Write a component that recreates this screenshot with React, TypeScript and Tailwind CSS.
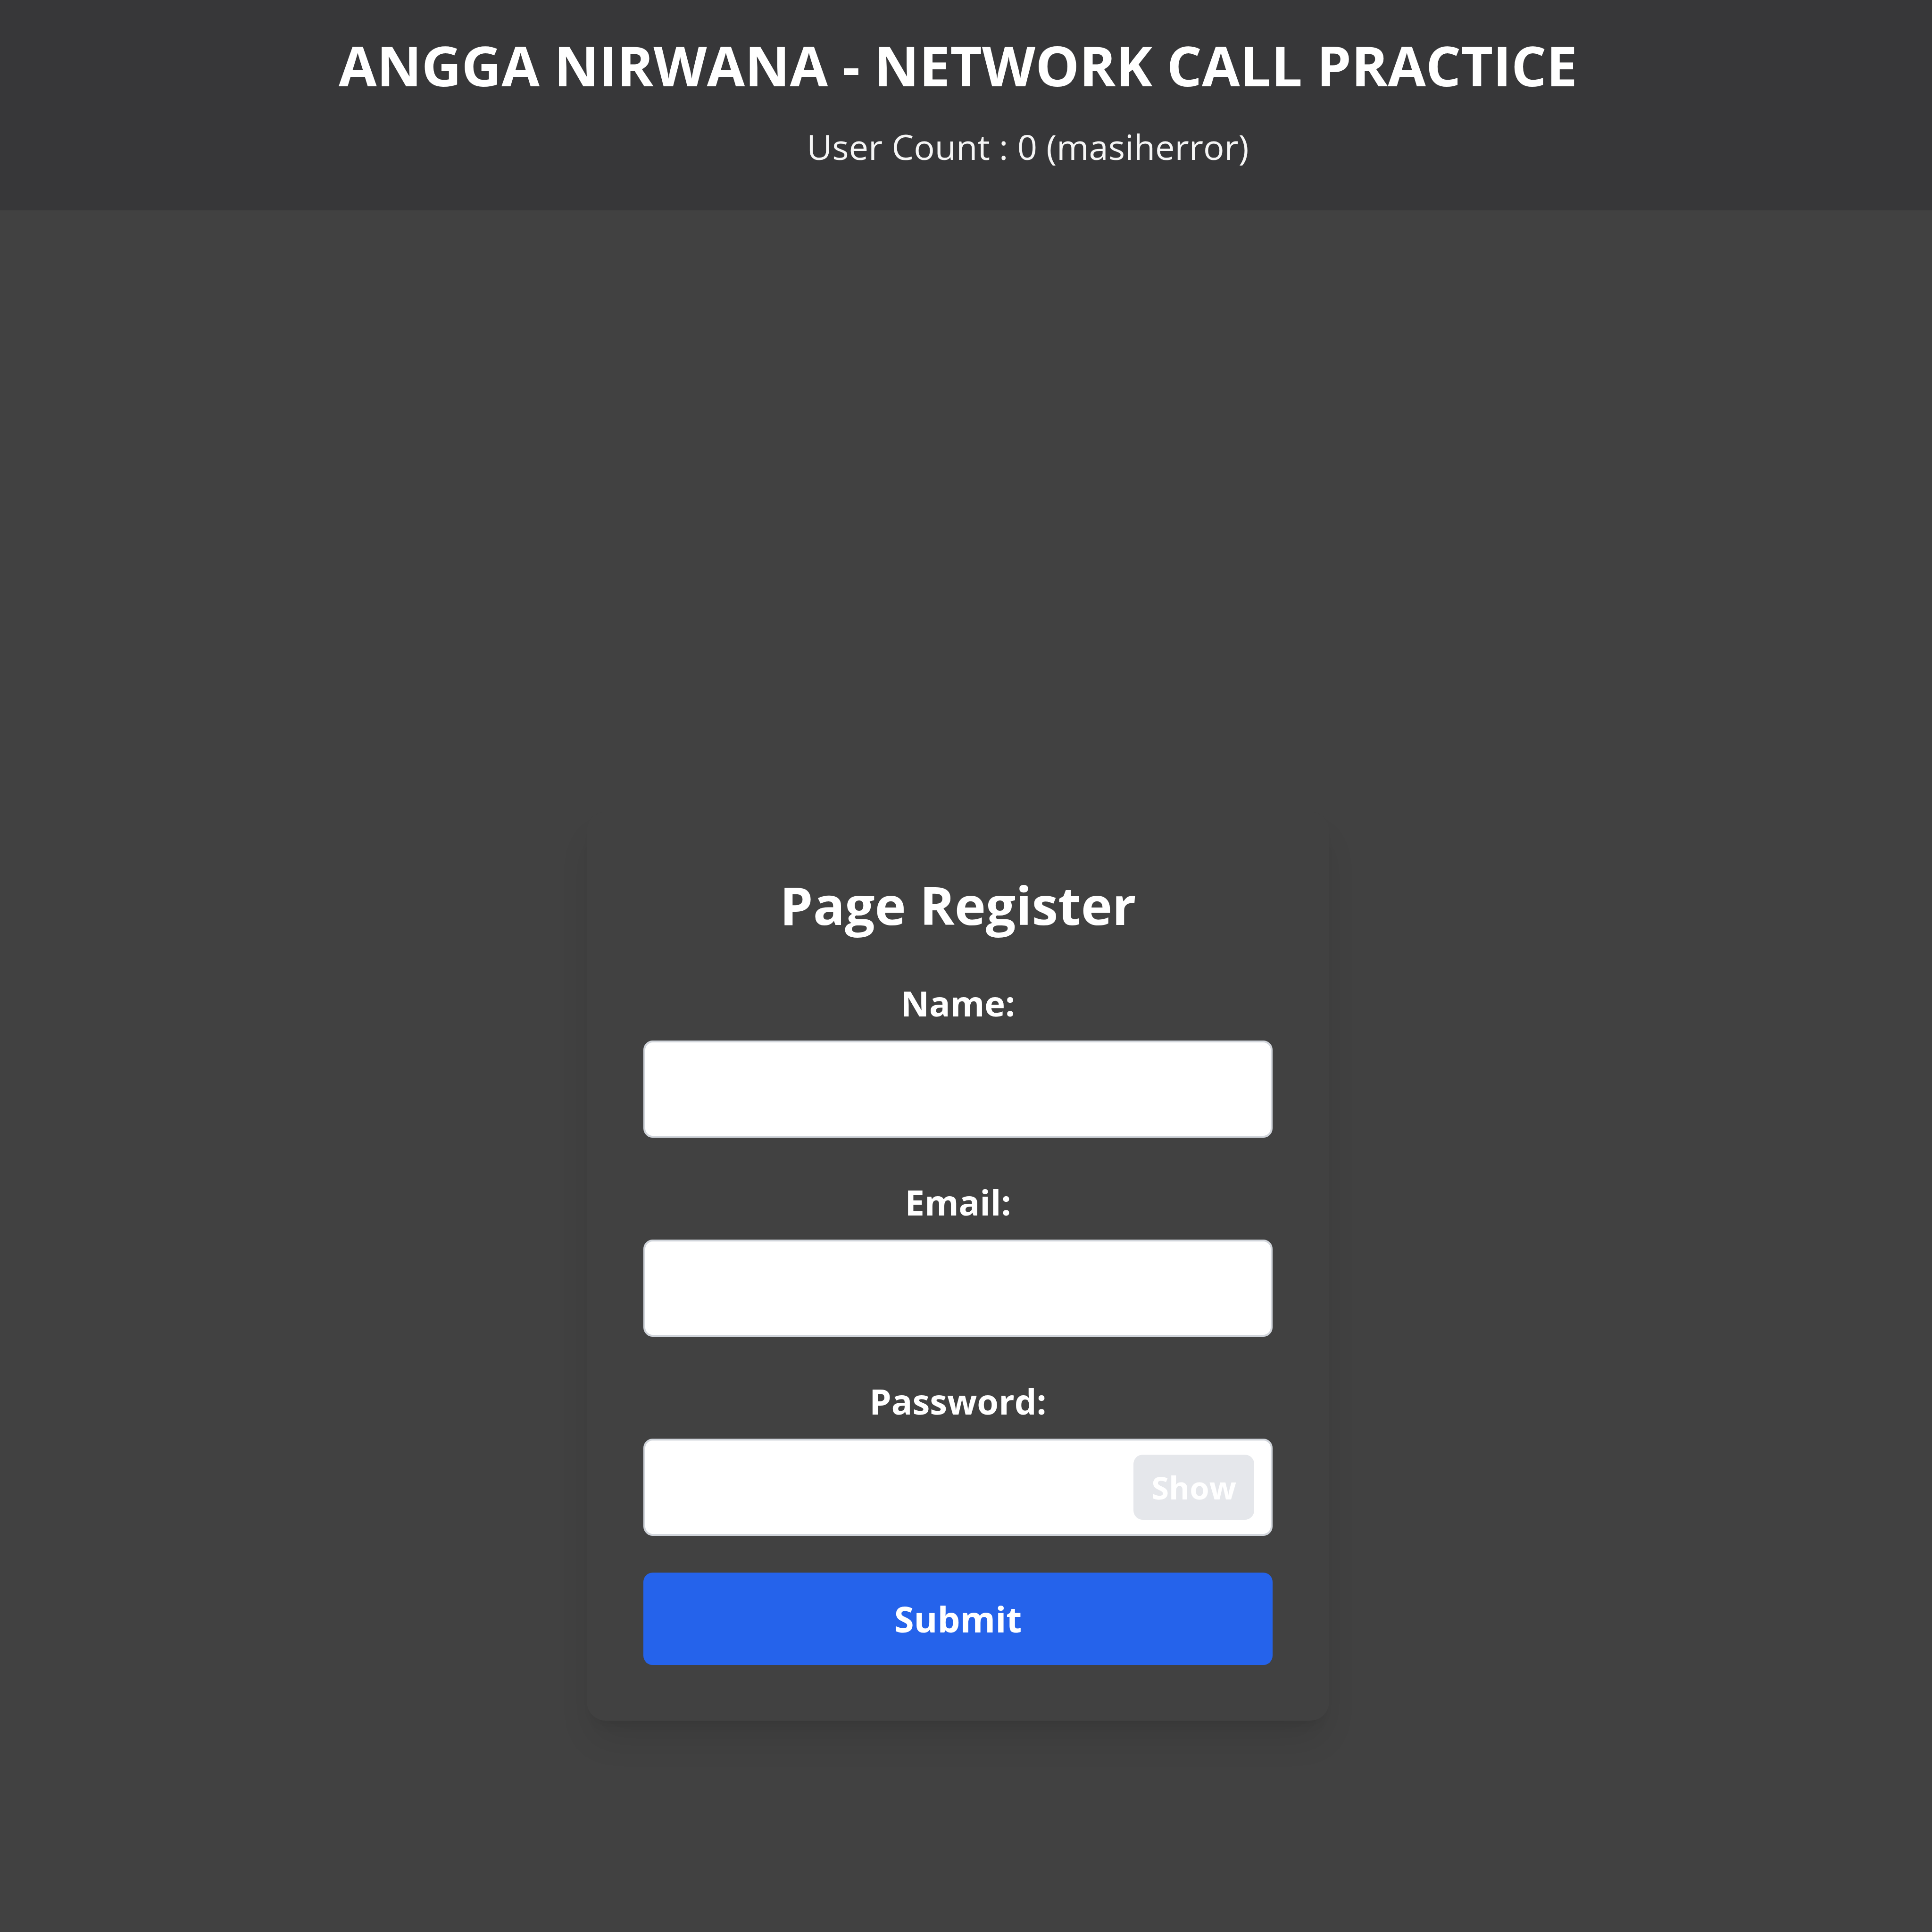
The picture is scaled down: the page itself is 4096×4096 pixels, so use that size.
import { useState } from "react";

const inputClass =
  "block w-full h-[206px] rounded-[20px] border-[4px] border-[#d1d5db] bg-white px-10 text-[74px] leading-[118px] text-gray-900 outline-none";
const labelClass = "mb-5 block text-center text-[74px] leading-[118px] font-bold";

function Field({ id, label, type }: { id: string; label: string; type: string }) {
  return (
    <div className="mb-[78px]">
      <label htmlFor={id} className={labelClass}>
        {label}
      </label>
      <input id={id} name={id} type={type} className={inputClass} />
    </div>
  );
}

export default function App() {
  const [visible, setVisible] = useState(false);

  return (
    <div className="flex min-h-screen flex-col bg-[#414141] font-['Open_Sans','Noto_Sans',sans-serif] text-white">
      <header className="bg-[#373739] pt-[59px] pr-[34px] pb-[76px] text-center">
        <h1 className="mb-9 text-[117px] leading-[157px] font-bold">
          ANGGA NIRWANA - NETWORK CALL PRACTICE
        </h1>
        <p className="pl-[296px] text-[74px] leading-[118px] text-neutral-100">
          User Count : 0 (masiherror)
        </p>
      </header>

      <main className="flex flex-1 flex-col items-center justify-end pr-[34px] pb-[448px]">
        <form
          className="w-full max-w-[1574px] rounded-[40px] bg-[#414141] px-[120px] py-[118px] shadow-[0_49px_74px_-15px_rgba(0,0,0,0.1),0_20px_29px_-20px_rgba(0,0,0,0.1)]"
          onSubmit={(e) => e.preventDefault()}
        >
          <h2 className="mb-[72px] text-center text-[112px] leading-[157px] font-bold">
            Page Register
          </h2>
          <Field id="name" label="Name:" type="text" />
          <Field id="email" label="Email:" type="email" />
          <div className="mb-[78px]">
            <label htmlFor="password" className={labelClass}>
              Password:
            </label>
            <div className="relative">
              <input
                id="password"
                name="password"
                type={visible ? "text" : "password"}
                className={inputClass}
              />
              <button
                type="button"
                onClick={() => setVisible(!visible)}
                className="absolute inset-y-[34px] right-[39px] rounded-[20px] bg-[#e5e7eb] px-[38px] text-[67px] leading-[98px] font-bold text-white"
              >
                {visible ? "Hide" : "Show"}
              </button>
            </div>
          </div>
          <button
            type="submit"
            className="block h-[196px] w-full rounded-[20px] bg-[#2563eb] text-[76px] leading-[118px] font-bold"
          >
            Submit
          </button>
        </form>
      </main>
    </div>
  );
}
